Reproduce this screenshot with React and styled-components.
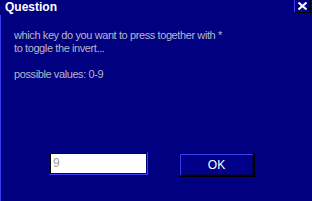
import React from 'react'
import styled, { createGlobalStyle } from 'styled-components'

const Global = createGlobalStyle`
  html, body {
    margin: 0;
    padding: 0;
    background: #000080;
  }
`

const Window = styled.div`
  width: 312px;
  height: 201px;
  background: #000080;
  display: flex;
  flex-direction: column;
  font-family: 'Liberation Sans', Arial, sans-serif;
  overflow: hidden;
`

const TitleBar = styled.div`
  height: 15px;
  display: flex;
  justify-content: space-between;
  align-items: flex-start;
`

const Title = styled.span`
  color: #ffffff;
  font-weight: bold;
  font-size: 12px;
  line-height: 14px;
  padding-left: 5px;
`

const CloseBtn = styled.div`
  width: 17px;
  height: 13px;
  box-sizing: border-box;
  margin-right: 1px;
  border-left: 1px solid #3c3cf0;
  border-right: 2px solid #000000;
  border-bottom: 1px solid #000000;
  display: flex;
  align-items: center;
  justify-content: center;
`

const Body = styled.div`
  flex: 1;
  display: flex;
  flex-direction: column;
  border-left: 1px solid #3c3cf0;
  padding: 14px 0 24px 13px;
`

const Message = styled.p`
  margin: 0;
  color: #b8b8c8;
  font-size: 11px;
  line-height: 13px;
  letter-spacing: -0.4px;
`

const Gap = styled.div`
  height: 13px;
`

const Row = styled.div`
  margin-top: auto;
  display: flex;
  align-items: flex-start;
  padding-left: 35px;
  gap: 31px;
`

const Field = styled.div`
  width: 99px;
  height: 23px;
  box-sizing: border-box;
  border: 1px solid;
  border-color: #000080 #3c3cf0 #3c3cf0 #000080;
  background: #ffffff;
  box-shadow: inset 1px 1px 0 #000000, inset -1px -1px 0 #000080;
  padding: 3px 0 0 3px;
  color: #a0a0a0;
  font-size: 12px;
  line-height: 14px;
`

const Button = styled.div`
  width: 76px;
  height: 24px;
  margin-top: 1px;
  box-sizing: border-box;
  border: 1px solid #000000;
  border-right-width: 2px;
  border-bottom-width: 2px;
  background: #000088;
  box-shadow: inset 1px 1px 0 #3c3cf0, inset -1px -1px 0 #00005a;
  color: #ffffff;
  font-size: 12px;
  display: flex;
  align-items: center;
  justify-content: center;
  padding-top: 1px;
`

export default function App () {
  return (
    <Window>
      <Global />
      <TitleBar>
        <Title>Question</Title>
        <CloseBtn>
          <svg width='9' height='8' viewBox='0 0 9 8'>
            <path d='M0.5 0.5 L8.5 7.5 M8.5 0.5 L0.5 7.5' stroke='#ffffff' strokeWidth='2' />
          </svg>
        </CloseBtn>
      </TitleBar>
      <Body>
        <Message>which key do you want to press together with *</Message>
        <Message>to toggle the invert...</Message>
        <Gap />
        <Message>possible values: 0-9</Message>
        <Row>
          <Field>9</Field>
          <Button>OK</Button>
        </Row>
      </Body>
    </Window>
  )
}
